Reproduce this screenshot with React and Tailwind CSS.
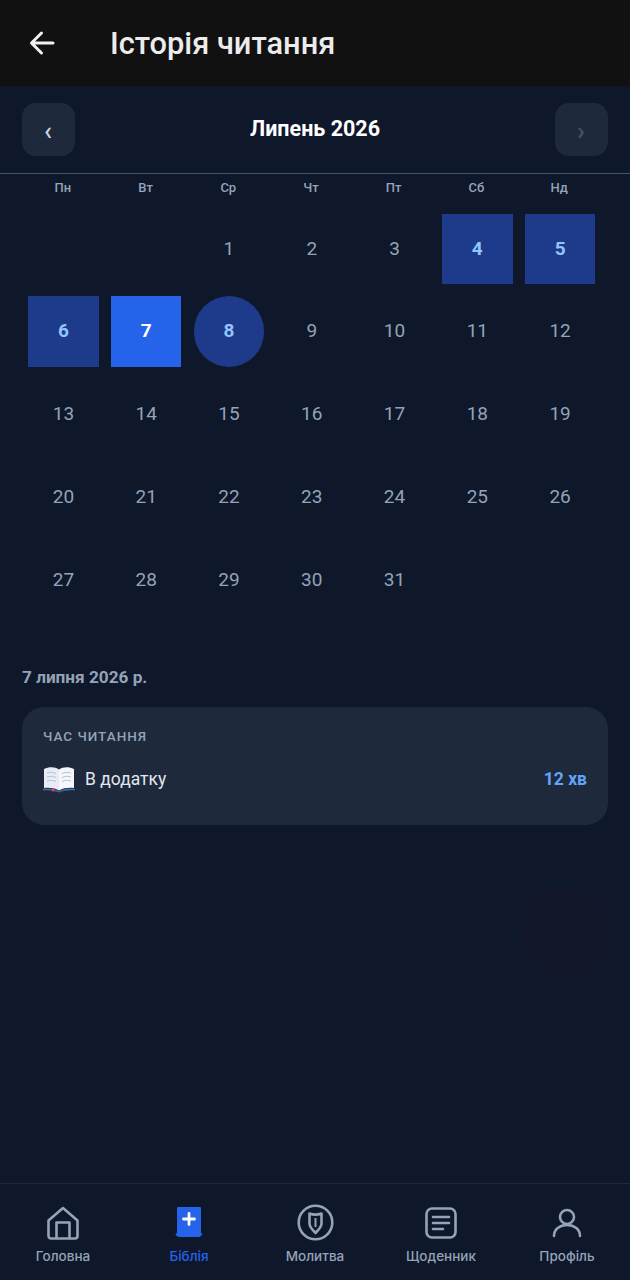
import React from 'react';

const weekDays = ['Пн', 'Вт', 'Ср', 'Чт', 'Пт', 'Сб', 'Нд'];
const days = [null, null, ...Array.from({ length: 31 }, (_, i) => i + 1)];

const dayClass = (day) => {
    if (day === 7) return 'bg-[#2563eb] text-white font-bold';
    if (day === 8) return 'bg-[#1e3a8a] text-[#93c5fd] font-bold rounded-full';
    if ([4, 5, 6].includes(day)) return 'bg-[#1e3a8a] text-[#93c5fd] font-bold';
    return 'text-[#94a3b8]';
};

const HomeIcon = () => (
    <svg width="34" height="36" viewBox="0 0 34 36" fill="none" stroke="#94a3b8" strokeWidth="2.6" strokeLinejoin="round" strokeLinecap="round">
        <path d="M2.5 15.5 17 3l14.5 12.5v15.5a2.5 2.5 0 0 1-2.5 2.5H5a2.5 2.5 0 0 1-2.5-2.5z" />
        <path d="M10.5 33V17.500h13V33" />
    </svg>
);

const BibleIcon = () => (
    <svg width="28" height="33" viewBox="0 0 28 33">
        <path d="M3 1h22a1 1 0 0 1 1 1v25l1.500 1-1 1.500-2 1.500H4l-3-1.500-.5-1.500L2 27V2a1 1 0 0 1 1-1z" fill="#2563eb" />
        <path d="M14 7.500v11M8.500 13h11" stroke="#fff" strokeWidth="2.800" strokeLinecap="round" />
    </svg>
);

const PrayerIcon = () => (
    <svg width="37" height="37" viewBox="0 0 37 37" fill="none" stroke="#94a3b8" strokeWidth="2.600" strokeLinejoin="round">
        <circle cx="18.500" cy="18.500" r="16.800" />
        <path d="M12.500 9.500c4 1.500 8 1.500 12 0v10c0 3.500-3 6.500-6 9.500-3-3-6-6-6-9.500z" />
        <path d="M18.500 14v9" strokeWidth="2" />
    </svg>
);

const JournalIcon = () => (
    <svg width="32" height="32" viewBox="0 0 32 32" fill="none" stroke="#94a3b8" strokeWidth="2.600" strokeLinecap="round">
        <rect x="1.500" y="1.500" width="29" height="29" rx="5.500" />
        <path d="M8 10h16M8 16h16M8 22h10" />
    </svg>
);

const ProfileIcon = () => (
    <svg width="30" height="30" viewBox="0 0 30 30" fill="none" stroke="#94a3b8" strokeWidth="2.600" strokeLinecap="round">
        <circle cx="15" cy="9" r="7" />
        <path d="M2 28c0-6.500 5.500-11 13-11s13 4.500 13 11" />
    </svg>
);

const BookEmoji = () => (
    <svg width="32" height="28" viewBox="0 0 32 28">
        <path d="M1 23V4c5-2.500 11-2.500 15 .5v21c-4-2.500-10-3-15-2.500z" fill="#e8edf5" />
        <path d="M31 23V4c-5-2.500-11-2.500-15 .5v21c4-2.500 10-3 15-2.500z" fill="#f4f6fb" />
        <path d="M4 8c3-1 6-.8 9 .5M4 12c3-1 6-.8 9 .5M4 16c3-1 6-.8 9 .5M19 8.500c3-1.300 6-1.500 9-.5M19 12.500c3-1.300 6-1.500 9-.5M19 16.500c3-1.300 6-1.500 9-.5" stroke="#b6c0d0" strokeWidth="1" fill="none" />
        <path d="M0 24c5-1 11-.5 16 2.500 5-3 11-3.500 16-2.500v1.500c-5-.8-11-.2-16 2-5-2.200-11-2.800-16-2z" fill="#3b6ea8" />
        <path d="M9 23h2.500v4L10.200 26 9 27z" fill="#e0405e" />
    </svg>
);

const navItems = [
    { label: 'Головна', icon: <HomeIcon /> },
    { label: 'Біблія', icon: <BibleIcon />, active: true },
    { label: 'Молитва', icon: <PrayerIcon /> },
    { label: 'Щоденник', icon: <JournalIcon /> },
    { label: 'Профіль', icon: <ProfileIcon /> },
];

const App = () => {
    return (
        <div className="relative flex flex-col w-[630px] h-[1280px] bg-[#0f172a] font-['Roboto',sans-serif] overflow-hidden">
            <header className="flex items-center h-[86px] bg-[#111111] shrink-0">
                <div className="w-[110px] pl-[26px] pb-[1px]">
                    <svg width="34" height="34" viewBox="0 0 34 34" fill="none" stroke="#f1f1f1" strokeWidth="3" strokeLinecap="round" strokeLinejoin="round">
                        <path d="M27 17H6M15.500 7 5.500 17l10 10" />
                    </svg>
                </div>
                <h1 className="text-[30.800px] leading-none text-[#ececec] font-medium pt-[3px]">Історія читання</h1>
            </header>

            <div className="flex items-center justify-between h-[88px] px-[22px] border-b border-[#475569] shrink-0">
                <button className="flex items-center justify-center w-[53px] h-[53px] pt-[3px] pr-[1px] rounded-[14px] bg-[#1e293b] text-[#cbd5e1] text-[26px] font-medium">‹</button>
                <h2 className="text-[21.500px] font-bold text-white">Липень 2026</h2>
                <button className="flex items-center justify-center w-[53px] h-[53px] pt-[3px] pr-[1px] rounded-[14px] bg-[#1e293b] text-[#475569] text-[26px] font-medium">›</button>
            </div>

            <div className="grid grid-cols-7 pl-[21.500px] pr-[29.500px] pt-[6px] h-[33px] shrink-0">
                {weekDays.map((d) => (
                    <div key={d} className="text-center text-[13px] font-medium leading-[16px] text-[#94a3b8]">{d}</div>
                ))}
            </div>

            <div className="grid grid-cols-7 auto-rows-[82.800px] pl-[22px] pr-[28.500px] mt-[6.500px] shrink-0">
                {days.map((day, i) => (
                    <div key={i} className="flex items-start justify-center">
                        {day && (
                            <div className={`flex items-center justify-center w-[70.600px] h-[70.600px] text-[19px] ${dayClass(day)}`}>{day}</div>
                        )}
                    </div>
                ))}
            </div>

            <p className="mt-[38.500px] px-[22px] text-[17.200px] leading-[22px] font-bold text-[#94a3b8]">7 липня 2026 р.</p>

            <div className="mx-[22px] mt-[19px] h-[118px] rounded-[22px] bg-[#1e293b] px-[21px] pt-[21px] shrink-0">
                <p className="text-[13.500px] leading-[16px] font-medium tracking-[1px] text-[#94a3b8]">ЧАС ЧИТАННЯ</p>
                <div className="flex items-center justify-between mt-[21px]">
                    <div className="flex items-center gap-[10px]">
                        <BookEmoji />
                        <span className="text-[17.500px] text-[#e2e8f0]">В додатку</span>
                    </div>
                    <span className="text-[17.500px] font-bold text-[#60a5fa]">12 хв</span>
                </div>
            </div>

            <div className="absolute left-[521px] top-[888px] w-[92px] h-[88px] rounded-full bg-[#111729]" />

            <nav className="mt-auto flex h-[97px] border-t border-[#1e293b] shrink-0">
                {navItems.map((item) => (
                    <div key={item.label} className="flex-1 flex flex-col items-center">
                        <div className="flex items-center justify-center h-[37px] mt-[20px]">{item.icon}</div>
                        <span className={`mt-[7px] text-[13.500px] leading-[17px] font-medium font-['Inter',sans-serif] ${item.active ? 'text-[#2563eb]' : 'text-[#94a3b8]'}`}>{item.label}</span>
                    </div>
                ))}
            </nav>
        </div>
    );
};

export default App;
